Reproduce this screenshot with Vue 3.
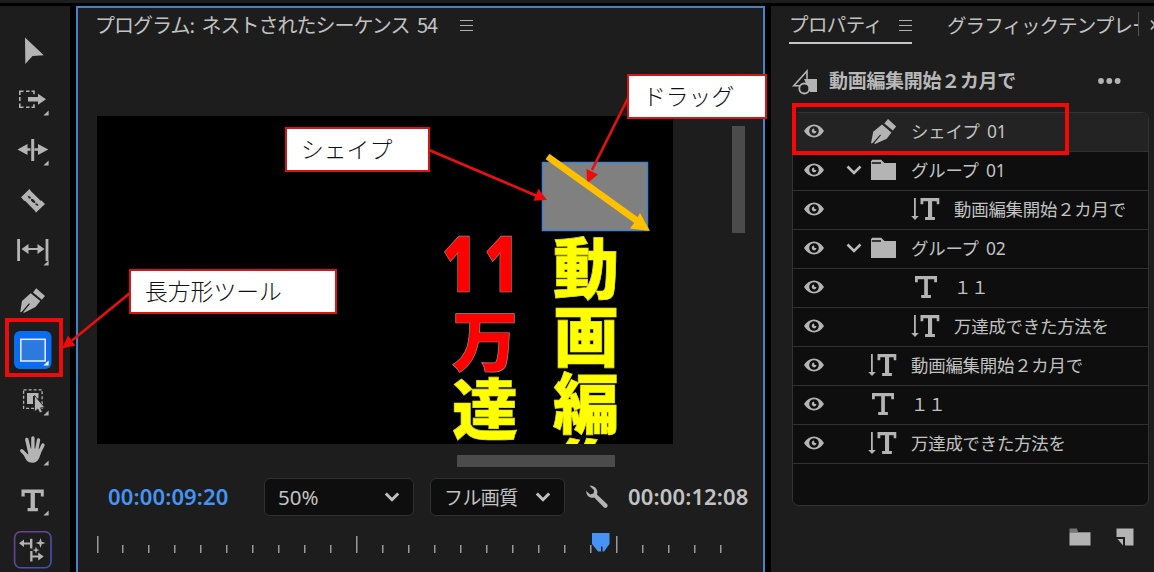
<script setup>
import { computed } from 'vue';

const layers = [
  { label: 'シェイプ 01', type: 'pen', depth: 0, active: true },
  { label: 'グループ 01', type: 'group', depth: 0 },
  { label: '動画編集開始２カ月で', type: 'vtext', depth: 1 },
  { label: 'グループ 02', type: 'group', depth: 0 },
  { label: '１１', type: 'text', depth: 1 },
  { label: '万達成できた方法を', type: 'vtext', depth: 1 },
  { label: '動画編集開始２カ月で', type: 'vtext', depth: 0 },
  { label: '１１', type: 'text', depth: 0 },
  { label: '万達成できた方法を', type: 'vtext', depth: 0 },
];

const tools = ['select', 'track', 'ripple', 'razor', 'slip', 'pen', 'rect', 'object', 'hand', 'type', 'remix'];
const withSubmenu = ['track', 'ripple', 'slip', 'rect', 'object', 'hand', 'type'];

// every tenth tick is a long one
const ticks = computed(() => Array.from({ length: 25 }, (_, i) => ({
  x: Math.floor(i * 25.97),
  long: i % 10 === 0,
})));
</script>

<template>
  <div class="app">
    <div class="top-strip"></div>
    <div class="panels">
      <nav class="toolbar">
        <svg v-for="tool in tools" :key="tool" class="tool" viewBox="0 0 70 50">
          <path v-if="tool === 'select'" d="M25 11.5 43.8 29.2 32.5 30 25.3 38z" />
          <g v-else-if="tool === 'track'">
            <path class="line" d="M19.8 19v-3.7h3.7M26 15.3h3.5M31.5 15.3h2.5v3M19.8 21v4M19.8 27.5v3.7h3.7M26 31.2h3.5M31.5 31.2h2.5v-3" />
            <path d="M28 21h10v-3.2l8 5.5-8 5.5v-3.3H28z" />
          </g>
          <g v-else-if="tool === 'ripple'">
            <path d="M31.2 13h3v22h-3zM17.5 23.5l10-5.5v4.3h3v2.4h-3V29zM48.3 23.5 38 18v4.3h-3.5v2.4H38V29z" />
          </g>
          <g v-else-if="tool === 'razor'">
            <path d="M29.5 13 21 21.3 24.3 25 25 24.7 35.5 35.5 35.8 36.8 45 28 41.5 24.4 40.7 24.8 30.8 15z" />
            <path class="slot" d="M27.5 19.5l3.2 1.4.2 2 2 .2 2.3 2.3.1 2 2.1.1 1.2 2.6-3-1.2-.3-2-2-.1-2.3-2.3-.1-2-2-.1z" />
          </g>
          <g v-else-if="tool === 'slip'">
            <path d="M17.2 13h2.8v22h-2.8zM45.6 13h2.8v22h-2.8zM21.5 23l7-5v4h9v-4l7 5-7 5v-4h-9v4z" />
          </g>
          <g v-else-if="tool === 'pen'">
            <path d="M20.2 36.2 22 25 30.7 17.2 40.3 25 35.5 31 24 36.8 23.2 36.2 30 28 29 27.2 21.8 35.8z" />
            <path d="M33 16.5 36.2 12.2 45 20 41.8 23.8z" />
          </g>
          <g v-else-if="tool === 'rect'">
            <rect class="tool-active" x="14" y="5" width="37.5" height="38" rx="6" />
            <rect class="tool-rect" x="20.8" y="13.3" width="24.4" height="21.7" />
          </g>
          <g v-else-if="tool === 'object'">
            <rect class="line dashed" x="23.6" y="13.8" width="18.5" height="18.5" />
            <path d="M27 17h11.5v5.5h-3V20H33v8h-6z" />
            <path class="outlined" d="M34.5 19.5v16.300l3.300-2.800 2 4 2.600-1.200-1.900-3.900 4.300-.4z" />
          </g>
          <g v-else-if="tool === 'hand'">
            <path class="finger" d="M26.8 13.5 29.5 25M32.9 12v12M38.5 14l-2 11M43 19l-4.5 9M21.8 24.8l6 6" />
            <path d="M27.8 22.5h10.5l2.5 4.5c-1.3 5.5-3.3 9.7-8 9.7-3.3 0-5.5-1-7.3-4L23 27.5l5.2 1.5z" />
          </g>
          <path v-else-if="tool === 'type'" d="M21.5 13.5h22.3v7h-3v-3.4h-5.9v14.8h3v3.3H27.6v-3.3h3V17.1h-5.9v3.4h-3.2z" />
          <g v-else>
            <defs>
              <linearGradient id="remix" x1="0" y1="0" x2="1" y2="1">
                <stop offset="0" stop-color="#74408f" />
                <stop offset="1" stop-color="#3f4fc0" />
              </linearGradient>
            </defs>
            <rect x="14.6" y="5.8" width="36.4" height="36" rx="6" fill="none" stroke="url(#remix)" stroke-width="1.6" />
            <path d="M19 17.3l5-3.8v2.9h6v-3.7h2.4v9.8H30v-4h-6v2.6zM30.2 25h2.3v4.4h5.7v-3l5.5 4-5.5 4v-3h-5.7v4.2h-2.3z" />
            <path d="M40.5 12l1.2 3.7 3.8 1.3-3.8 1.2-1.2 3.8-1.2-3.8-3.8-1.2 3.8-1.3zM36 20.5l.9 2.7 2.6.8-2.6.9L36 27.5l-.9-2.6-2.6-.9 2.6-.8z" />
          </g>
          <path v-if="withSubmenu.includes(tool)" :class="{ white: tool === 'rect' }" d="M48.6 34.4v5.1h-5.2z" />
        </svg>
      </nav>

      <section class="program">
        <header class="program-title">
          <span>プログラム: ネストされたシーケンス 54</span>
          <i class="menu"></i>
        </header>
        <div class="monitor">
          <svg class="canvas" viewBox="97 116 576 328">
            <text class="big yellow" x="553" y="293">動</text>
            <text class="big yellow" x="553" y="361">画</text>
            <text class="big yellow" x="553" y="428">編</text>
            <text class="big yellow" x="553" y="495">集</text>
            <text class="big red digits" transform="translate(442 292) scale(.76 1)">11</text>
            <text class="big red" x="452" y="366">万</text>
            <text class="big yellow" x="452" y="434">達</text>
            <rect class="shape" x="542.5" y="162.5" width="105" height="68" />
          </svg>
          <div class="v-scroll"></div>
        </div>
        <div class="h-scroll"></div>
        <div class="controls">
          <span class="timecode current">00:00:09:20</span>
          <div class="select zoom">
            <span>50%</span>
            <svg viewBox="0 0 16 12"><path d="M1.8 2.5 8 8.7l6.2-6.2" /></svg>
          </div>
          <div class="select quality">
            <span>フル画質</span>
            <svg viewBox="0 0 16 12"><path d="M1.8 2.5 8 8.7l6.2-6.2" /></svg>
          </div>
          <svg class="wrench" viewBox="0 0 24 24">
            <path d="M4.500.8C8 .2 11.800 2.500 12.300 6.500c.1 1.200 0 2-.3 3l10 9.500c2 2.200-1 5.200-3.200 3.300L9.200 12.600C5 13.800 1 10.500 1.200 6l4 3.400 3.300-.9.700-3.200z" />
          </svg>
          <span class="timecode">00:00:12:08</span>
        </div>
        <svg class="ruler" viewBox="0 0 640 24">
          <rect v-for="tick in ticks" :key="tick.x" :x="tick.x" :y="tick.long ? 5 : 14" width="1.5" :height="tick.long ? 17 : 8" />
          <path class="playhead" d="M495 2h17.500v11l-5.500 7.500h-1.500v-5h-1.500v5H501L495 13z" />
        </svg>
      </section>

      <section class="properties">
        <div class="tabs">
          <div class="tab selected">
            <span>プロパティ</span>
            <i class="menu"></i>
          </div>
          <div class="tab clipped">グラフィックテンプレート</div>
          <svg class="more-tabs" viewBox="0 0 12 16"><path d="M1 3.500l4 4.500-4 4.500M6 3.500l4 4.500-4 4.500" /></svg>
        </div>
        <div class="clip-head">
          <svg class="clip-icon" viewBox="0 0 26 26">
            <path class="line" d="M9.500 16.700H1.800L15 2v9" />
            <path d="M12 10h13v13h-7z" />
            <circle class="ring" cx="12.300" cy="19.500" r="5" />
          </svg>
          <span>動画編集開始２カ月で</span>
          <svg class="dots" viewBox="0 0 24 8">
            <circle cx="4" cy="4" r="2.900" /><circle cx="12.300" cy="4" r="2.900" /><circle cx="20.600" cy="4" r="2.900" />
          </svg>
        </div>
        <ul class="layers">
          <li v-for="(layer, i) in layers" :key="i" :class="{ active: layer.active }">
            <svg class="eye" viewBox="0 0 22 16">
              <path fill-rule="evenodd" d="M1 8C3.500 3.800 7 1.500 11 1.500S18.500 3.800 21 8c-2.500 4.200-6 6.500-10 6.500S3.500 12.200 1 8zm10-4.800a4.800 4.800 0 1 0 0 9.600 4.800 4.800 0 0 0 0-9.600z" />
              <path d="M11 5.600c-3 0-3 4.800 0 4.800 1.500 0 2.400-1.100 2.400-2.400L11.500 8z" />
            </svg>
            <svg class="caret" viewBox="0 0 18 14">
              <path v-if="layer.type === 'group'" d="M2.500 3.500 9 10l6.500-6.500" />
            </svg>
            <svg class="kind" :class="{ nested: layer.depth }" viewBox="0 0 30 26">
              <g v-if="layer.type === 'pen'">
                <path d="M3 25.500 5.200 13.700 14 6.500l9.400 8-4.600 6.200L7 26l-.8-.8L13 17.300l-.8-.7L4.700 25z" />
                <path d="M16.300 5.500 20 1l8.200 7.500-3.400 4z" />
              </g>
              <g v-else-if="layer.type === 'group'">
                <path d="M3 4.200 4.200 2.800h9L16.500 6H28v17H3z" />
                <path class="fold" d="M3.800 6H13" />
              </g>
              <path v-else-if="layer.type === 'vtext'" d="M9.500 2h18.800v6.200h-2.600V5.300h-4.600V21h2.800v3h-9.800v-3h2.900V5.300h-4.700v2.900H9.500zM3 2h1.800v18h3L4 24 .2 20H3z" />
              <path v-else d="M4 2h22v6.200h-2.800V5.300h-6.300V21h3v3h-9.700v-3h3V5.300H6.800v2.900H4z" />
            </svg>
            <span class="name">{{ layer.label }}</span>
          </li>
        </ul>
        <div class="footer">
          <svg viewBox="0 0 22 18">
            <path class="dim" d="M.5.500h7.500l1 3.500H.5z" />
            <path d="M.5 4.300h21V17.500H.5z" />
          </svg>
          <svg class="note" viewBox="0 0 18 18">
            <path d="M.5.500h17v17H9V9H.5z" />
            <path d="M1.500 11H7v6.500z" />
          </svg>
        </div>
      </section>
    </div>

    <!-- annotations -->
    <div class="mark mark-tool"></div>
    <div class="mark mark-layer"></div>
    <svg class="arrows" viewBox="0 0 1154 572">
      <path class="arrow" d="M130 293 72 340.500M429 150l108 46M628 98l-36 72" />
      <path class="head" d="M62 348.500 75.500 345.500 68 335.500zM547 200l-13.500.8 5-12zM587 183.500l-.5-14.500 11.500 5.500z" />
      <path class="drag" d="M547.500 156.500 638 221.500" />
      <path class="drag-head" d="M650 231l-20-2.500 5-6.500 5-9z" />
    </svg>
    <div class="callout rect-tool">長方形ツール</div>
    <div class="callout shape-label">シェイプ</div>
    <div class="callout drag-label">ドラッグ</div>
  </div>
</template>

<style>
body {
  margin: 0;
  background: #000;
}
</style>

<style scoped>
.app {
  position: relative;
  width: 1154px;
  height: 572px;
  overflow: hidden;
  background: #000;
  color: #c2c2c2;
  font-family: "Noto Sans CJK JP", sans-serif;
  font-size: 17.4px;
  white-space: nowrap;
}

svg {
  display: block;
  flex: none;
  fill: #b4b4b4;
}

.line {
  fill: none;
  stroke: #b4b4b4;
  stroke-width: 1.6;
}

.top-strip {
  height: 3px;
  margin-bottom: 3px;
  background: #1d1d1d;
}

.panels {
  display: flex;
  height: 566px;
}

/* toolbar */
.toolbar {
  flex: none;
  width: 70px;
  padding-top: 20px;
  margin-right: 6px;
  box-sizing: border-box;
  background: #1d1d1d;
}

.tool {
  width: 70px;
  height: 50px;
}

.slot { fill: #1d1d1d; }
.tool-active { fill: #0c6cf0; }
.tool-rect { fill: #2c7ade; stroke: #e6f0ff; stroke-width: 1.5; }
.white { fill: #fff; }
.dashed { stroke-width: 1.3; stroke-dasharray: 3 2; }
.outlined { stroke: #1d1d1d; stroke-width: 0.8; }
.finger { fill: none; stroke: #b4b4b4; stroke-width: 3.4; stroke-linecap: round; }

/* program monitor */
.program {
  flex: none;
  width: 689px;
  height: 570px;
  margin-right: 6px;
  padding: 0 0 0 19px;
  box-sizing: border-box;
  border: 2px solid #4581c9;
  background: #1d1d1d;
}

.program-title {
  display: flex;
  align-items: center;
  height: 32px;
  padding-bottom: 76px;
  gap: 21px;
  margin-left: -2px;
  font-size: 20px;
  letter-spacing: -1px;
  word-spacing: 4px;
}

.program-title span { width: 344px; }

.menu {
  flex: none;
  width: 13px;
  height: 7px;
  margin-top: 2px;
  border-top: 1.5px solid #b0b0b0;
  border-bottom: 1.5px solid #b0b0b0;
  padding: 1px 0;
  background: linear-gradient(#b0b0b0, #b0b0b0) center / 100% 1px no-repeat;
}

.monitor {
  display: flex;
}

.canvas {
  width: 576px;
  height: 328px;
  background: #000;
}

.big {
  font-size: 66px;
  font-weight: 900;
  stroke: #8a8a30;
  stroke-width: 0.7;
}

.yellow { fill: #ff0; stroke: #e0e020; }
.red { fill: #f00; stroke: #a88; }

.digits {
  font-family: "Noto Sans", sans-serif;
  font-size: 78px;
  font-weight: 900;
  letter-spacing: 10px;
}

.shape { fill: #808080; stroke: #3d84d8; stroke-width: 1.5; }

.v-scroll {
  width: 13px;
  height: 107px;
  margin: 10px 0 0 59px;
  background: #4b4b4b;
}

.h-scroll {
  width: 158px;
  height: 12px;
  margin: 11px 0 11px 360px;
  background: #4b4b4b;
}

.controls {
  display: flex;
  align-items: center;
  height: 38px;
  margin-left: 11px;
}

.timecode {
  width: 121px;
  font-family: "Noto Sans", sans-serif;
  font-size: 22px;
  font-weight: 600;
  line-height: 36px;
  padding-bottom: 2px;
  letter-spacing: 0.15px;
}

.current {
  margin-right: 35px;
  color: #4594f5;
}

.select {
  display: flex;
  align-items: center;
  justify-content: space-between;
  height: 38px;
  padding: 0 13px;
  box-sizing: border-box;
  border: 1.5px solid #303030;
  border-radius: 6px;
  background: #0e0e0e;
}

.select svg {
  width: 16px;
  height: 12px;
  fill: none;
  stroke: #c0c0c0;
  stroke-width: 3;
}

.zoom {
  width: 150px;
  font-family: "Noto Sans", sans-serif;
  font-size: 20.5px;
}

.quality {
  width: 135px;
  margin: 0 20px 0 16px;
  font-size: 19px;
  letter-spacing: -0.6px;
}

.quality span { padding-bottom: 2px; }

.wrench {
  width: 24px;
  height: 24px;
  margin-right: 19px;
}

.ruler {
  width: 640px;
  height: 24px;
  margin-top: 15px;
  fill: #999;
}

.playhead { fill: #4594f5; }

/* properties */
.properties {
  flex: none;
  width: 383px;
  box-sizing: border-box;
  padding-left: 18px;
  background: #1d1d1d;
}

.tabs {
  display: flex;
  height: 39px;
  overflow: hidden;
  font-size: 19.5px;
}

.tab {
  display: flex;
  flex: none;
  align-items: center;
  height: 36px;
}

.tab span { padding-bottom: 2px; }

.selected {
  width: 123px;
  justify-content: space-between;
  border-bottom: 2px solid #c6c6c6;
  letter-spacing: -0.6px;
}

.clipped {
  width: 191px;
  height: 24px;
  margin: 6px 10px 0 35px;
  overflow: hidden;
  border-right: 1px solid #555;
  letter-spacing: -0.9px;
}

.more-tabs {
  width: 12px;
  height: 16px;
  margin: 11px 0 0 1px;
  fill: none;
  stroke: #b4b4b4;
  stroke-width: 1.8;
}

.clip-head {
  display: flex;
  align-items: center;
  height: 26px;
  margin: 24px 0 17px 3px;
  font-size: 19px;
  font-weight: 600;
  letter-spacing: -0.3px;
}

.clip-head span {
  padding-bottom: 5px;
  color: #b8b8b8;
}

.clip-icon {
  width: 26px;
  height: 26px;
  margin-right: 11px;
}

.ring { fill: #1d1d1d; stroke: #b4b4b4; stroke-width: 1.8; }

.dots {
  width: 24px;
  height: 8px;
  margin: 0 0 2px 81px;
}

.layers {
  width: 357px;
  height: 394px;
  margin: 0 0 0 3px;
  padding: 0;
  box-sizing: border-box;
  overflow: hidden;
  border: 1.5px solid #333;
  border-radius: 7px;
  background: #0e0e0e;
  list-style: none;
}

.layers li {
  display: flex;
  align-items: center;
  height: 39.06px;
  padding: 0 0 2px 10px;
  box-sizing: border-box;
  border-bottom: 1.5px solid #303030;
}

.layers .active { background: #232323; }

.eye {
  width: 22px;
  height: 16px;
}

.caret {
  width: 18px;
  height: 14px;
  margin: 0 5px 0 20px;
  fill: none;
  stroke: #bbb;
  stroke-width: 2.6;
}

.kind {
  width: 30px;
  height: 26px;
  margin-right: 13px;
  overflow: visible;
}

.nested { margin-left: 43px; }
.fold { stroke: #0e0e0e; stroke-width: 1.4; }

.name {
  padding-bottom: 1px;
  font-family: "Noto Sans", "Noto Sans CJK JP", sans-serif;
  line-height: 26px;
  letter-spacing: -0.2px;
  word-spacing: 3px;
}

.footer {
  display: flex;
  gap: 25px;
  margin: 22px 0 0 280px;
}

.footer svg { width: 22px; height: 18px; }
.footer .note { width: 18px; }
.dim { fill: #777; }

/* annotations lie over the whole window */
.mark {
  position: absolute;
  box-sizing: border-box;
  border: 4px solid #f00a0a;
}

.mark-tool {
  left: 5px;
  top: 318px;
  width: 58px;
  height: 59px;
}

.mark-layer {
  left: 792px;
  top: 103px;
  width: 277px;
  height: 52px;
}

.arrows {
  position: absolute;
  left: 0;
  top: 0;
  width: 1154px;
  height: 572px;
}

.arrow { fill: none; stroke: #e81010; stroke-width: 2.6; }
.head { fill: #f00a0a; }
.drag { stroke: #ffc000; stroke-width: 6.5; }
.drag-head { fill: #ffc000; }

.callout {
  position: absolute;
  height: 45px;
  box-sizing: border-box;
  border: 2px solid #d81414;
  background: #fff;
  color: #111;
  font-size: 22.8px;
  font-weight: 300;
  line-height: 39px;
}

.rect-tool {
  left: 129px;
  top: 269px;
  width: 208px;
  padding-left: 14px;
}

.shape-label {
  left: 285px;
  top: 127px;
  width: 145px;
  padding-left: 14px;
}

.drag-label {
  left: 627px;
  top: 74px;
  width: 140px;
  padding-left: 14px;
}
</style>
